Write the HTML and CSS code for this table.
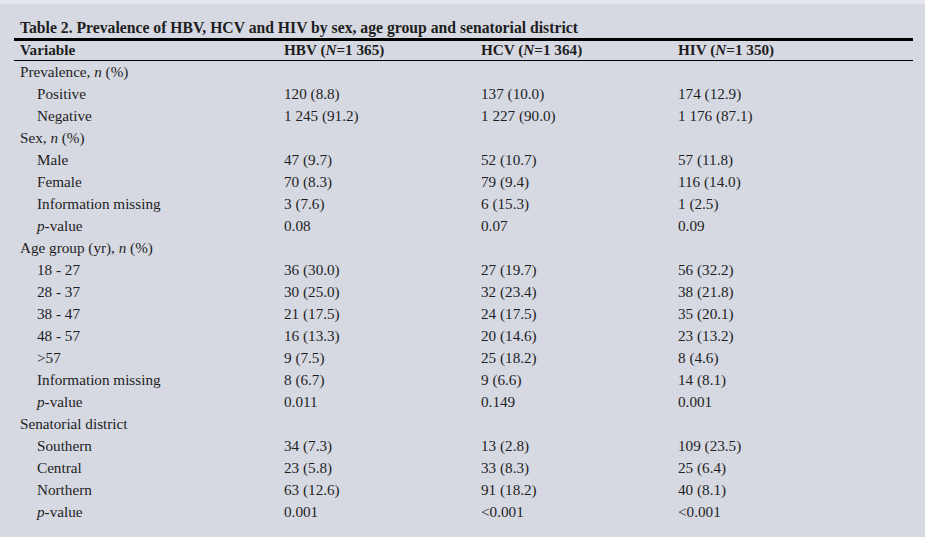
FILE: index.html
```html
<!DOCTYPE html>
<html>
<head>
<meta charset="utf-8">
<link rel="stylesheet" href="styles.css">
</head>
<body>
<div class="page">
  <h1 class="title">Table 2. Prevalence of HBV, HCV and HIV by sex, age group and senatorial district</h1>
  <table class="data">
    <colgroup><col class="c1"><col class="c2"><col class="c3"><col class="c4"></colgroup>
    <thead>
      <tr><th>Variable</th><th>HBV (<i>N</i>=1 365)</th><th>HCV (<i>N</i>=1 364)</th><th>HIV (<i>N</i>=1 350)</th></tr>
    </thead>
    <tbody>
      <tr><td>Prevalence, <i>n</i> (%)</td><td></td><td></td><td></td></tr>
      <tr><td class="sub">Positive</td><td>120 (8.8)</td><td>137 (10.0)</td><td>174 (12.9)</td></tr>
      <tr><td class="sub">Negative</td><td>1 245 (91.2)</td><td>1 227 (90.0)</td><td>1 176 (87.1)</td></tr>
      <tr><td>Sex, <i>n</i> (%)</td><td></td><td></td><td></td></tr>
      <tr><td class="sub">Male</td><td>47 (9.7)</td><td>52 (10.7)</td><td>57 (11.8)</td></tr>
      <tr><td class="sub">Female</td><td>70 (8.3)</td><td>79 (9.4)</td><td>116 (14.0)</td></tr>
      <tr><td class="sub">Information missing</td><td>3 (7.6)</td><td>6 (15.3)</td><td>1 (2.5)</td></tr>
      <tr><td class="sub"><i>p</i>-value</td><td>0.08</td><td>0.07</td><td>0.09</td></tr>
      <tr><td>Age group (yr), <i>n</i> (%)</td><td></td><td></td><td></td></tr>
      <tr><td class="sub">18 - 27</td><td>36 (30.0)</td><td>27 (19.7)</td><td>56 (32.2)</td></tr>
      <tr><td class="sub">28 - 37</td><td>30 (25.0)</td><td>32 (23.4)</td><td>38 (21.8)</td></tr>
      <tr><td class="sub">38 - 47</td><td>21 (17.5)</td><td>24 (17.5)</td><td>35 (20.1)</td></tr>
      <tr><td class="sub">48 - 57</td><td>16 (13.3)</td><td>20 (14.6)</td><td>23 (13.2)</td></tr>
      <tr><td class="sub">&gt;57</td><td>9 (7.5)</td><td>25 (18.2)</td><td>8 (4.6)</td></tr>
      <tr><td class="sub">Information missing</td><td>8 (6.7)</td><td>9 (6.6)</td><td>14 (8.1)</td></tr>
      <tr><td class="sub"><i>p</i>-value</td><td>0.011</td><td>0.149</td><td>0.001</td></tr>
      <tr><td>Senatorial district</td><td></td><td></td><td></td></tr>
      <tr><td class="sub">Southern</td><td>34 (7.3)</td><td>13 (2.8)</td><td>109 (23.5)</td></tr>
      <tr><td class="sub">Central</td><td>23 (5.8)</td><td>33 (8.3)</td><td>25 (6.4)</td></tr>
      <tr><td class="sub">Northern</td><td>63 (12.6)</td><td>91 (18.2)</td><td>40 (8.1)</td></tr>
      <tr><td class="sub"><i>p</i>-value</td><td>0.001</td><td>&lt;0.001</td><td>&lt;0.001</td></tr>
    </tbody>
  </table>
</div>
</body>
</html>
```

FILE: styles.css
```css
html, body {
  margin: 0;
  padding: 0;
}
body {
  background: #d6d9e2;
  width: 925px;
  height: 537px;
  overflow: hidden;
  border-top: 4px solid #e4e6ec;
  box-sizing: border-box;
  font-family: "Liberation Serif", "DejaVu Serif", serif;
  color: #1e1e1e;
}
.page {
  padding: 0 12px 0 14px;
}
.title {
  margin: 0;
  padding: 15px 0 0 6px;
  font-size: 15.7px;
  font-weight: bold;
  line-height: 18px;
  height: 19px;
}
.data {
  width: 899px;
  table-layout: fixed;
  border-collapse: collapse;
  font-size: 15.2px;
}
.c1 { width: 264px; }
.c2 { width: 197px; }
.c3 { width: 197px; }
.c4 { width: 241px; }
.data th, .data td {
  padding: 0 0 0 6px;
  text-align: left;
  white-space: nowrap;
}
.data thead th {
  font-weight: bold;
  border-top: 3px solid #000;
  border-bottom: 1px solid #000;
  height: 19px;
  line-height: 17px;
  vertical-align: top;
}
.data tbody td {
  height: 21px;
  line-height: 21px;
  padding-bottom: 1px;
}
.data td.sub { padding-left: 23px; }
```
